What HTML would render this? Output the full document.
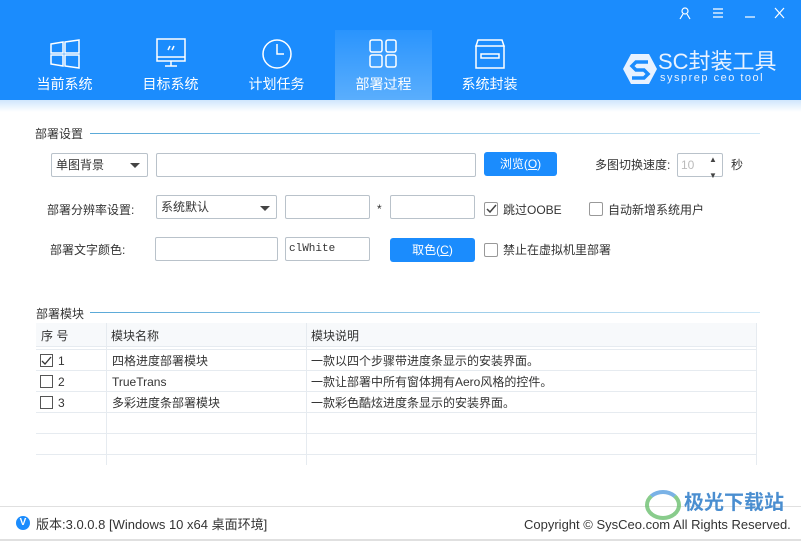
<!DOCTYPE html>
<html><head><meta charset="utf-8"><style>
*{margin:0;padding:0;box-sizing:border-box}
body{width:801px;height:541px;overflow:hidden;background:#fff;font-family:"Liberation Sans","Noto Sans CJK SC",sans-serif;font-size:12px;line-height:14px;color:#333;position:relative}
.abs{position:absolute;white-space:nowrap}
.hdr{left:0;top:0;width:801px;height:100px;background:#1b8cfd}
.strip{left:0;top:100px;width:801px;height:12px;background:linear-gradient(#cfe6fd,#fff)}
.tab{top:30px;width:97px;height:70px;color:#fff;font-size:14px;line-height:16px;text-align:center}
.tab .lbl{position:absolute;top:46px;left:0;width:100%}
.tab svg{position:absolute;top:8px;left:33px}
.act{background:linear-gradient(#2a94fd,#5aaefd)}
.inp{border:1px solid #b9c2ca;border-radius:2px;background:#fff;height:23px}
.btn{background:#1b8cfd;color:#fff;border-radius:3px;text-align:center;font-size:12px;line-height:24px;height:24px}
.cb{width:13px;height:13px;border:1px solid #555;background:#fff}
.cbl{border-color:#999;border-radius:2px;width:14px;height:14px}
.sec{height:1px;background:linear-gradient(90deg,#5aa9d8,#cfe8f7)}
.tri{width:0;height:0;border-left:5px solid transparent;border-right:5px solid transparent;border-top:5px solid #444}
.row{left:36px;width:720px;height:1px;background:#e6ebf0}
.col{width:1px;background:#e6ebf0}
</style></head><body>
<div class="abs hdr"></div>
<div class="abs strip"></div>
<svg class="abs" style="left:676px;top:6px" width="120" height="16" fill="none" stroke="#fff" stroke-width="1.2">
<circle cx="9" cy="5" r="3"/><path d="M4 13 L7 8 M14 13 L11 8"/>
<path d="M37 3h10M37 7h10M37 11h10"/>
<path d="M69 11h10"/>
<path d="M99 2l9 10M108 2l-9 10"/>
</svg>
<div class="abs tab" style="left:16px"><svg width="32" height="32" fill="none" stroke="#fff" stroke-width="1.5"><path d="M2 6l12-2v11H2zM16 4l14-2v13H16zM2 17h12v11L2 26zM16 17h14v13l-14-2z"/></svg><div class="lbl">当前系统</div></div>
<div class="abs tab" style="left:122px"><svg width="32" height="32" fill="none" stroke="#fff" stroke-width="1.5"><rect x="2" y="1" width="28" height="22"/><path d="M2 19h28M16 23v5M10 28h12M13 12l2-4M17 12l2-4"/></svg><div class="lbl">目标系统</div></div>
<div class="abs tab" style="left:228px"><svg width="32" height="32" fill="none" stroke="#fff" stroke-width="1.5"><circle cx="16" cy="16" r="14"/><path d="M16 6v10h7"/></svg><div class="lbl">计划任务</div></div>
<div class="abs tab act" style="left:335px"><svg width="32" height="32" fill="none" stroke="#fff" stroke-width="1.5"><rect x="2" y="2" width="12" height="12" rx="2"/><rect x="18" y="2" width="10" height="12" rx="2"/><rect x="2" y="17" width="12" height="12" rx="2"/><rect x="18" y="17" width="10" height="12" rx="2"/></svg><div class="lbl">部署过程</div></div>
<div class="abs tab" style="left:441px"><svg width="32" height="32" fill="none" stroke="#fff" stroke-width="1.5"><path d="M4 2h24l2 6H2zM2 8h28v22H2z"/><rect x="7" y="16" width="18" height="4"/></svg><div class="lbl">系统封装</div></div>
<svg class="abs" style="left:622px;top:52px" width="36" height="34"><path d="M9 2h18l8 15-8 15H9L1 17z" fill="#e8f2ff"/><path d="M26 10h-12l-4 4 4 4h8l4 4-4 4H10" fill="none" stroke="#1b8cfd" stroke-width="3.5"/></svg>
<div class="abs" style="left:658px;top:50px;color:#e8f2ff;font-size:22px;line-height:24px">SC封装工具</div>
<div class="abs" style="left:660px;top:72px;color:#e8f2ff;font-size:11px;line-height:12px;letter-spacing:1.5px">sysprep ceo tool</div>

<div class="abs" style="left:35px;top:127px">部署设置</div>
<div class="abs sec" style="left:90px;top:133px;width:670px"></div>
<div class="abs inp" style="left:51px;top:153px;width:97px;height:24px;padding:4px 4px">单图背景</div>
<div class="abs tri" style="left:130px;top:163px"></div>
<div class="abs inp" style="left:156px;top:153px;width:320px;height:24px"></div>
<div class="abs btn" style="left:484px;top:152px;width:73px">浏览(<u>O</u>)</div>
<div class="abs" style="left:595px;top:158px">多图切换速度:</div>
<div class="abs inp" style="left:677px;top:153px;width:46px;height:24px;color:#bbb;padding:4px 3px">10</div>
<div class="abs" style="left:709px;top:156px;font-size:8px;line-height:8px;color:#444">▲<br><br>▼</div>
<div class="abs" style="left:731px;top:158px">秒</div>

<div class="abs" style="left:47px;top:203px">部署分辨率设置:</div>
<div class="abs inp" style="left:156px;top:195px;width:121px;height:24px;padding:4px 4px">系统默认</div>
<div class="abs tri" style="left:260px;top:206px"></div>
<div class="abs inp" style="left:285px;top:195px;width:85px;height:24px"></div>
<div class="abs" style="left:377px;top:202px">*</div>
<div class="abs inp" style="left:390px;top:195px;width:85px;height:24px"></div>
<div class="abs cb cbl" style="left:484px;top:202px"></div>
<svg class="abs" style="left:485px;top:202px" width="13" height="13"><path d="M2 7l3 3 6-7" fill="none" stroke="#444" stroke-width="1.5"/></svg>
<div class="abs" style="left:503px;top:203px">跳过OOBE</div>
<div class="abs cb cbl" style="left:589px;top:202px"></div>
<div class="abs" style="left:608px;top:203px">自动新增系统用户</div>

<div class="abs" style="left:50px;top:243px">部署文字颜色:</div>
<div class="abs inp" style="left:155px;top:237px;width:123px;height:24px"></div>
<div class="abs inp" style="left:285px;top:237px;width:85px;height:24px;font-family:'Liberation Mono',monospace;padding:4px 3px;font-size:11px">clWhite</div>
<div class="abs btn" style="left:390px;top:238px;width:85px">取色(<u>C</u>)</div>
<div class="abs cb cbl" style="left:484px;top:243px"></div>
<div class="abs" style="left:503px;top:243px">禁止在虚拟机里部署</div>

<div class="abs" style="left:36px;top:307px">部署模块</div>
<div class="abs sec" style="left:90px;top:312px;width:670px"></div>
<div class="abs" style="left:36px;top:323px;width:720px;height:24px;background:#f7f9fb;border-bottom:1px solid #e6ebf0"></div>
<div class="abs" style="left:41px;top:329px">序 号</div>
<div class="abs" style="left:111px;top:329px">模块名称</div>
<div class="abs" style="left:311px;top:329px">模块说明</div>
<div class="abs col" style="left:106px;top:323px;height:142px"></div>
<div class="abs col" style="left:306px;top:323px;height:142px"></div>
<div class="abs col" style="left:756px;top:323px;height:142px"></div>
<div class="abs row" style="top:349px"></div>
<div class="abs row" style="top:370px"></div>
<div class="abs row" style="top:391px"></div>
<div class="abs row" style="top:412px"></div>
<div class="abs row" style="top:433px"></div>
<div class="abs row" style="top:454px"></div>
<div class="abs cb" style="left:40px;top:354px"></div>
<svg class="abs" style="left:40px;top:354px" width="13" height="13"><path d="M2 7l3 3 6-7" fill="none" stroke="#333" stroke-width="1.3"/></svg>
<div class="abs" style="left:58px;top:354px">1</div>
<div class="abs" style="left:112px;top:354px">四格进度部署模块</div>
<div class="abs" style="left:311px;top:354px">一款以四个步骤带进度条显示的安装界面。</div>
<div class="abs cb" style="left:40px;top:375px"></div>
<div class="abs" style="left:58px;top:375px">2</div>
<div class="abs" style="left:112px;top:375px">TrueTrans</div>
<div class="abs" style="left:311px;top:375px">一款让部署中所有窗体拥有Aero风格的控件。</div>
<div class="abs cb" style="left:40px;top:396px"></div>
<div class="abs" style="left:58px;top:396px">3</div>
<div class="abs" style="left:112px;top:396px">多彩进度条部署模块</div>
<div class="abs" style="left:311px;top:396px">一款彩色酷炫进度条显示的安装界面。</div>

<div class="abs" style="left:0;top:506px;width:801px;height:1px;background:#e0e0e0"></div>
<div class="abs" style="left:0;top:539px;width:801px;height:2px;background:#e0e0e0"></div>
<div class="abs" style="left:16px;top:516px;width:14px;height:14px;border-radius:50%;background:#1b8cfd;color:#fff;font-size:10px;text-align:center;line-height:14px;font-weight:bold">V</div>
<div class="abs" style="left:36px;top:517px;font-size:13px;line-height:15px">版本:3.0.0.8 [Windows 10 x64 桌面环境]</div>
<div class="abs" style="left:524px;top:517px;font-size:13px;line-height:15px">Copyright © SysCeo.com All Rights Reserved.</div>
<div class="abs" style="left:684px;top:491px;font-size:20px;line-height:24px;font-weight:bold;color:#4a8ed0">极光下载站</div>
<div class="abs" style="left:645px;top:490px;width:36px;height:30px;border-radius:50%;border:4px solid #6cc070;border-top-color:#5aa0e0;opacity:.8"></div>
</body></html>
